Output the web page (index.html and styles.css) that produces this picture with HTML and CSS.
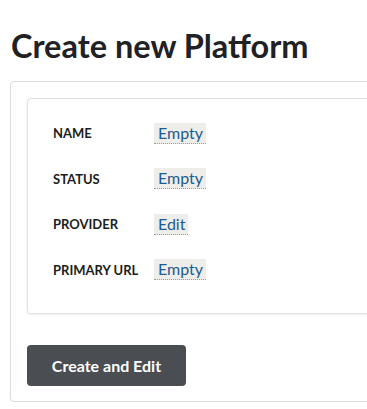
FILE: index.html
```html
<!DOCTYPE html>
<html>
<head>
<meta charset="utf-8">
<link rel="stylesheet" href="styles.css">
</head>
<body>
<div class="page">
  <h1 class="title">Create new Platform</h1>
  <div class="panel">
    <div class="fields">
      <div class="row"><span class="label">Name</span><span class="value">Empty</span></div>
      <div class="row"><span class="label">Status</span><span class="value">Empty</span></div>
      <div class="row"><span class="label">Provider</span><span class="value">Edit</span></div>
      <div class="row"><span class="label">Primary URL</span><span class="value">Empty</span></div>
    </div>
    <button class="btn">Create and Edit</button>
  </div>
</div>
</body>
</html>
```
FILE: styles.css
```css
html, body {
  margin: 0;
  padding: 0;
  background: #fff;
  overflow: hidden;
}
body {
  font-family: Lato, "Liberation Sans", sans-serif;
  color: #222326;
}
.page {
  padding: 0 0 0 10px;
  margin-right: -24px;
}
.title {
  font-size: 32.5px;
  font-weight: 700;
  line-height: 44px;
  margin: 24px 0 13px 1px;
  color: #1f2124;
}
.panel {
  border: 1px solid #dcdcdc;
  border-radius: 4px;
  padding: 16px 16px 15px 16px;
  box-shadow: 0 1px 2px rgba(0,0,0,0.04);
}
.fields {
  border: 1px solid #e0e0e0;
  border-radius: 4px;
  box-shadow: 0 1px 3px rgba(0,0,0,0.08);
  padding: 24px 25px 33px 25px;
  display: flex;
  flex-direction: column;
  gap: 25.5px;
  margin-bottom: 31px;
}
.row {
  display: flex;
  align-items: center;
  height: 20px;
}
.label {
  width: 101px;
  font-size: 13px;
  font-weight: 700;
  text-transform: uppercase;
  color: #1c1d20;
}
.value {
  background: #efede9;
  color: #1d5b91;
  font-size: 16px;
  line-height: 20px;
  padding: 0 3px 0 4px;
  border-bottom: 1px dotted #8aa0b8;
}
.btn {
  display: block;
  font-family: Lato, "Liberation Sans", sans-serif;
  background: #4a4d51;
  color: #fff;
  border: none;
  border-radius: 4px;
  width: 159px;
  height: 41px;
  font-size: 16px;
  font-weight: 700;
  padding: 0;
}
```
